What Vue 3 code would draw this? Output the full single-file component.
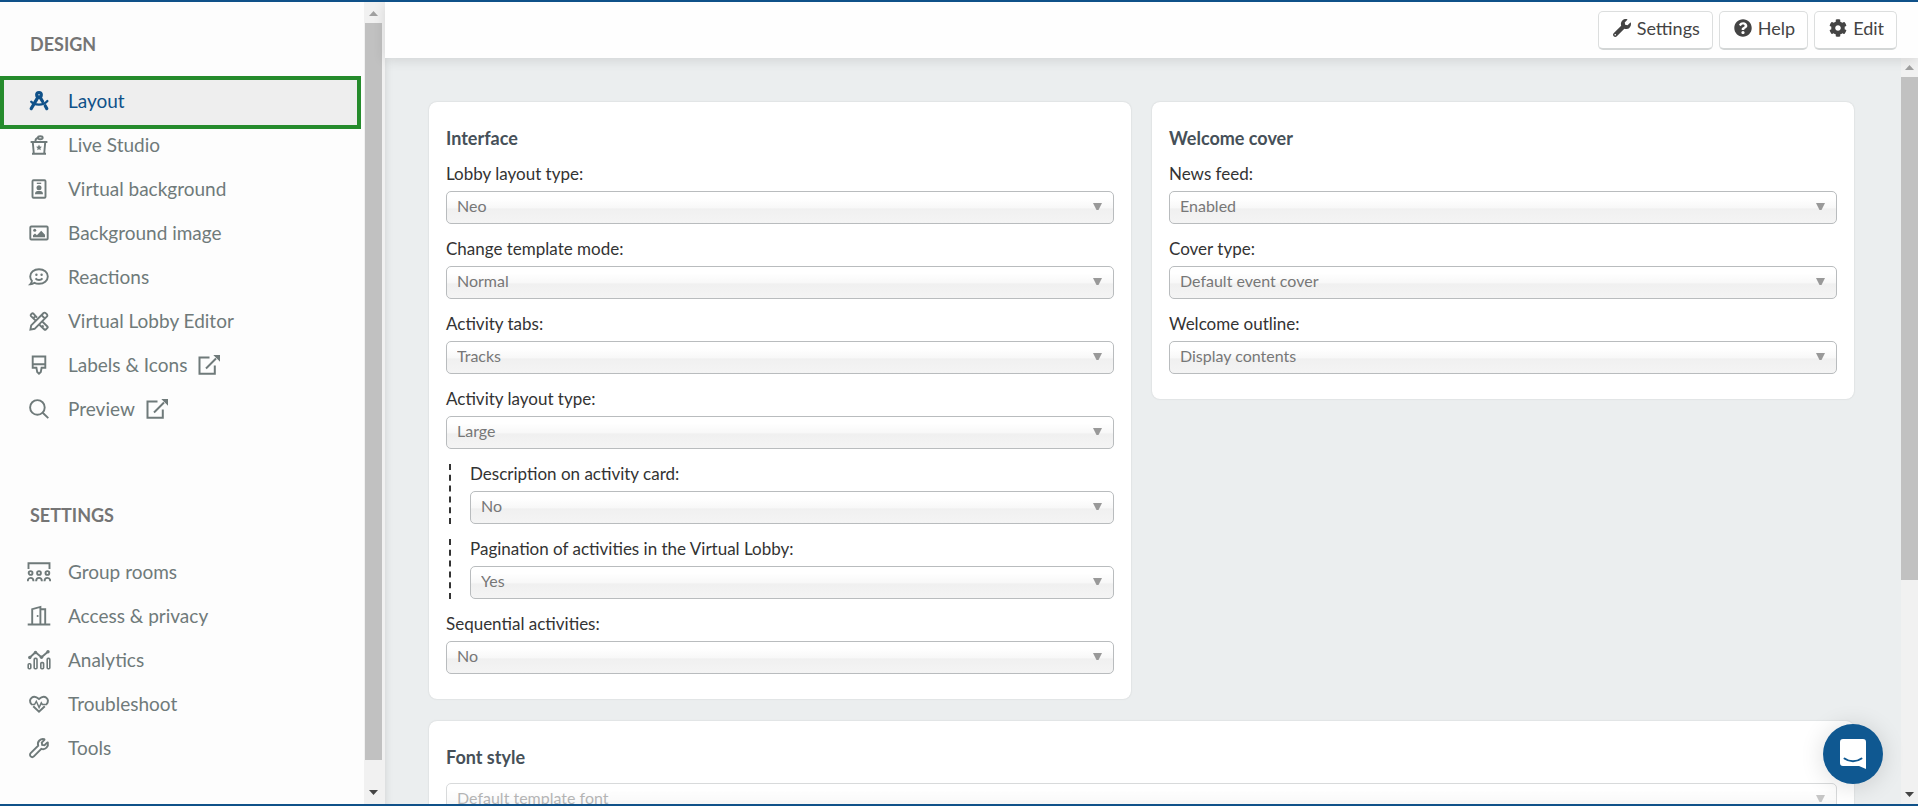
<script setup>
import { ref, reactive } from 'vue'

const wrenchPath = 'M507.73 109.1c-2.24-9.03-13.54-12.09-20.12-5.51l-74.36 74.36-67.88-11.31-11.31-67.88 74.36-74.36c6.62-6.62 3.43-17.9-5.66-20.16-47.38-11.74-99.55.91-136.58 37.93-39.64 39.64-50.55 97.1-34.05 147.2L18.74 402.76c-24.99 24.99-24.99 65.51 0 90.5 24.99 24.99 65.51 24.99 90.5 0l213.21-213.21c50.12 16.71 107.47 5.68 147.37-34.22 37.07-37.07 49.7-89.32 37.91-136.73z'

// Stroked 24x24 line icons; "f" marks solid shapes.
const icons = {
  layout: '<g stroke-width="3.200" stroke-linecap="round"><circle cx="12" cy="5.800" r="2.300"/><path d="M10.700 8.600 4.200 19.600"/><path d="M13.300 8.600l2.300 3.900M18.200 16.800l1.600 2.800"/><path d="M4.200 12.800c3.600 3.800 11.800 4.200 16.200-.8" stroke-width="2.300"/></g>',
  studio: '<path d="M3.600 9h16.800M5.800 9.300l1 11.200M18.200 9.300l-1 11.200M5 20.800h14M8.500 8.700c-.3-2.200 1-3.700 3.500-4.200"/><ellipse cx="13.300" cy="4.800" rx="2.400" ry="1.500"/><path class="f" d="m12 11.600.9 1.900 2 .3-1.500 1.400.4 2-1.800-1-1.800 1 .4-2-1.500-1.400 2-.3z"/>',
  badge: '<rect x="5.500" y="3.200" width="13" height="17.600" rx="1"/><path d="M9.800 6.300h4.400" stroke-width="1.300"/><circle class="f" cx="12" cy="10.800" r="2.500"/><path class="f" d="M8 17.200c0-2.200 1.200-3.200 2.700-3.200h2.600c1.500 0 2.700 1 2.700 3.200z"/>',
  image: '<rect x="3.300" y="5.500" width="17.400" height="13" rx="1"/><circle class="f" cx="7.700" cy="9.300" r="1.500"/><path class="f" d="M6 16.300v-2l2-1.800 1.900 1.700 4.300-4.500 3.800 4v2.600z"/>',
  reaction: '<path d="M12 4.200c5 0 8.800 3.200 8.800 7.300s-3.800 7.300-8.800 7.300c-1.700 0-3.200-.3-4.500-1-1.300 1-2.800 1.500-4.300 1.500 1-1 1.600-2.300 1.700-3.500-1-1.200-1.700-2.700-1.700-4.300 0-4.100 3.800-7.300 8.800-7.300z"/><circle class="f" cx="9.400" cy="9.800" r="1.200"/><circle class="f" cx="14.600" cy="9.800" r="1.200"/><path d="M8.500 13.300c1.800 2.300 5.200 2.300 7 0"/>',
  tools: '<path d="M10 8.600 6.200 4.400c-.8-.8-3.200 1.500-2.400 2.400l4.600 4.600M15.500 12.800l4.900 4.700c.5.500.5.900 0 1.400l-1.600 1.600c-.5.500-.9.500-1.400 0L12.700 16M3.400 20.600l.8-4.200L16.600 4c1.300-1.300 4.700 2 3.400 3.400L7.600 19.800zM14.500 6.200l3.300 3.300M6.300 9.200l1.600-1.500M15 18l1.500-1.500"/>',
  brush: '<path d="M5.700 3.500h12.600v11.300h-3.700l-.8 4.200-1.800 1.700-1.800-1.700-.8-4.200H5.700zM5.700 11.300h12.600"/>',
  search: '<circle cx="10.400" cy="10.400" r="7.300"/><path d="m15.700 15.700 5.600 5.400"/>',
  group: '<path d="M1.500 9V3.300h21V9"/><circle cx="3.600" cy="13" r="1.900"/><circle cx="12" cy="13" r="1.900"/><circle cx="20.400" cy="13" r="1.900"/><path d="M.7 21.200c.2-4.400 5.600-4.400 5.800 0M9.100 21.200c.2-4.400 5.600-4.400 5.800 0M17.500 21.200c.2-4.400 5.600-4.400 5.800 0"/>',
  door: '<path d="M.7 20.500h22.600M5.200 20.500V5.200l8.200-2.300v17.600M13.400 5.200h4.800v15.300"/><circle class="f" cx="10.600" cy="12" r="1"/>',
  chart: '<path d="m2.500 9.800 6-5.500 6 5 6.700-5.800" stroke-width="1.900"/><circle class="f" cx="2.800" cy="9.500" r="1.700"/><circle class="f" cx="8.500" cy="4.500" r="1.700"/><circle class="f" cx="14.500" cy="9.200" r="1.700"/><circle class="f" cx="21" cy="3.700" r="1.700"/><g stroke-width="1.600"><rect x="1.200" y="15.800" width="2.600" height="5" rx="1"/><rect x="7.200" y="10.400" width="2.800" height="10.400" rx="1"/><rect x="13.800" y="14.600" width="2.800" height="6.200" rx="1"/><rect x="20.200" y="10.400" width="2.600" height="10.400" rx="1"/></g>',
  heart: '<path d="M4.400 12.200C.8 7.200 6.200 1.600 12 7c5.800-5.400 11.200.2 7.600 5.200M6.200 14.200l5.800 5.600 5.800-5.600" stroke-width="1.900"/><path d="M4 12.500h3.500l1.800-3.200 2.800 6.200 2.200-4.600 1 1.600H20" stroke-width="1.500"/>',
  wrench: `<path transform="translate(3 3) scale(.0352)" stroke-width="54" d="${wrenchPath}"/>`
}

const groups = [
  { title: 'Design', items: [
    { label: 'Layout', icon: 'layout' },
    { label: 'Live Studio', icon: 'studio' },
    { label: 'Virtual background', icon: 'badge' },
    { label: 'Background image', icon: 'image' },
    { label: 'Reactions', icon: 'reaction' },
    { label: 'Virtual Lobby Editor', icon: 'tools' },
    { label: 'Labels & Icons', icon: 'brush', external: true },
    { label: 'Preview', icon: 'search', external: true }
  ] },
  { title: 'Settings', items: [
    { label: 'Group rooms', icon: 'group' },
    { label: 'Access & privacy', icon: 'door' },
    { label: 'Analytics', icon: 'chart' },
    { label: 'Troubleshoot', icon: 'heart' },
    { label: 'Tools', icon: 'wrench' }
  ] }
]
const active = ref('Layout')

const actions = [
  { label: 'Settings', d: wrenchPath + 'M64 472c-13.25 0-24-10.75-24-24 0-13.26 10.75-24 24-24s24 10.74 24 24c0 13.25-10.750 24-24 24z' },
  { label: 'Help', d: 'M504 256c0 136.997-111.043 248-248 248S8 392.997 8 256C8 119.083 119.043 8 256 8s248 111.083 248 248zM262.655 90c-54.497 0-89.255 22.957-116.549 63.758-3.536 5.286-2.353 12.415 2.715 16.258l34.699 26.310c5.205 3.947 12.621 3.008 16.665-2.122 17.864-22.658 30.113-35.797 57.303-35.797 20.429 0 45.698 13.148 45.698 32.958 0 14.976-12.363 22.667-32.534 33.976C247.128 238.528 216 254.941 216 296v4c0 6.627 5.373 12 12 12h56c6.627 0 12-5.373 12-12v-1.333c0-28.462 83.186-29.647 83.186-106.667 0-58.002-60.165-102-116.531-102zM256 338c-25.365 0-46 20.635-46 46 0 25.364 20.635 46 46 46s46-20.636 46-46c0-25.365-20.635-46-46-46z' },
  { label: 'Edit', d: 'M487.400 315.700l-42.600-24.600c4.300-23.200 4.300-47 0-70.200l42.600-24.600c4.900-2.800 7.100-8.600 5.500-14-11.100-35.600-30-67.800-54.700-94.600-3.800-4.100-10-5.100-14.800-2.300L380.800 110c-17.900-15.400-38.500-27.300-60.800-35.100V25.800c0-5.600-3.900-10.500-9.400-11.700-36.700-8.200-74.300-7.800-109.200 0-5.500 1.200-9.400 6.100-9.400 11.700V75c-22.200 7.900-42.800 19.800-60.800 35.100L88.700 85.500c-4.900-2.800-11-1.900-14.800 2.300-24.700 26.700-43.600 58.900-54.700 94.600-1.700 5.400.6 11.200 5.500 14L67.300 221c-4.300 23.200-4.300 47 0 70.200l-42.600 24.600c-4.900 2.800-7.100 8.600-5.500 14 11.100 35.600 30 67.800 54.700 94.600 3.800 4.100 10 5.100 14.800 2.300l42.600-24.600c17.900 15.400 38.500 27.300 60.800 35.100v49.200c0 5.600 3.900 10.500 9.400 11.700 36.700 8.200 74.300 7.800 109.200 0 5.500-1.200 9.400-6.100 9.400-11.700v-49.200c22.200-7.900 42.800-19.800 60.800-35.100l42.600 24.600c4.900 2.800 11 1.900 14.800-2.300 24.700-26.700 43.600-58.900 54.700-94.600 1.500-5.500-.7-11.300-5.600-14.100zM256 336c-44.100 0-80-35.900-80-80s35.900-80 80-80 80 35.900 80 80-35.900 80-80 80z' }
]

const cards = reactive([
  { title: 'Interface', fields: [
    { id: 'lobby', label: 'Lobby layout type:', value: 'Neo' },
    { id: 'mode', label: 'Change template mode:', value: 'Normal' },
    { id: 'tabs', label: 'Activity tabs:', value: 'Tracks' },
    { id: 'activity', label: 'Activity layout type:', value: 'Large' },
    { id: 'description', label: 'Description on activity card:', value: 'No', options: ['No', 'Yes'], nested: true },
    { id: 'pagination', label: 'Pagination of activities in the Virtual Lobby:', value: 'Yes', options: ['No', 'Yes'], nested: true },
    { id: 'sequential', label: 'Sequential activities:', value: 'No', options: ['No', 'Yes'] }
  ] },
  { title: 'Welcome cover', fields: [
    { id: 'news', label: 'News feed:', value: 'Enabled' },
    { id: 'cover', label: 'Cover type:', value: 'Default event cover' },
    { id: 'outline', label: 'Welcome outline:', value: 'Display contents' }
  ] },
  { title: 'Font style', wide: true, fields: [
    { id: 'font', value: 'Default template font', disabled: true }
  ] }
])
</script>

<template>
  <div class="page">
    <aside class="sidebar">
      <nav class="nav">
        <section v-for="g in groups" :key="g.title" class="group">
          <h2 class="group-title">{{ g.title }}</h2>
          <ul class="list">
            <li v-for="item in g.items" :key="item.label">
              <a href="#" class="item" :class="{ active: item.label === active }" @click.prevent="active = item.label">
                <svg class="icon" viewBox="0 0 24 24" aria-hidden="true" v-html="icons[item.icon]"></svg>
                <span>{{ item.label }}</span>
                <svg v-if="item.external" class="external" viewBox="0 0 24 24" aria-hidden="true">
                  <path d="M12.500 4.500H2.500v16.300h15.300V12.500M9 15.500 19 5.500" />
                  <path class="solid" d="M16.300 2H23v6.700l-2.200-2.200-2.300-2.300z" />
                </svg>
              </a>
            </li>
          </ul>
        </section>
      </nav>
      <div class="scroll" aria-hidden="true">
        <svg class="arrow dim" viewBox="0 0 9 5"><path d="M0 5 4.500 0 9 5z" /></svg>
        <div class="track"><div class="thumb tall"></div></div>
        <svg class="arrow" viewBox="0 0 9 5"><path d="M0 0h9L4.500 5z" /></svg>
      </div>
    </aside>

    <div class="body">
      <header class="header">
        <button v-for="a in actions" :key="a.label" type="button" class="action">
          <svg viewBox="0 0 512 512" aria-hidden="true"><path :d="a.d" /></svg>{{ a.label }}
        </button>
      </header>
      <div class="lower">
        <main class="content">
          <section v-for="c in cards" :key="c.title" class="card" :class="{ wide: c.wide }">
            <h3 :id="c.fields[0].id + '-title'" class="card-title">{{ c.title }}</h3>
            <div v-for="f in c.fields" :key="f.id" class="field" :class="{ nested: f.nested }">
              <label v-if="f.label" :for="f.id">{{ f.label }}</label>
              <div class="control" :class="{ disabled: f.disabled }">
                <select :id="f.id" v-model="f.value" :disabled="f.disabled" :aria-labelledby="f.label ? undefined : f.id + '-title'">
                  <option v-for="o in f.options || [f.value]" :key="o">{{ o }}</option>
                </select>
                <svg class="caret" viewBox="0 0 9 7" aria-hidden="true"><path d="M0 0h9L5.500 7h-2z" /></svg>
              </div>
            </div>
          </section>
        </main>
        <div class="scroll" aria-hidden="true">
          <svg class="arrow dim" viewBox="0 0 9 5"><path d="M0 5 4.500 0 9 5z" /></svg>
          <div class="track"><div class="thumb short"></div></div>
          <svg class="arrow" viewBox="0 0 9 5"><path d="M0 0h9L4.500 5z" /></svg>
        </div>
      </div>
    </div>

    <button type="button" class="chat" aria-label="Open chat">
      <svg viewBox="0 0 28 32" aria-hidden="true">
        <path class="bubble" d="M4 1h20a3 3 0 0 1 3 3v27l-7-3H4a3 3 0 0 1-3-3V4a3 3 0 0 1 3-3z" />
        <path class="smile" d="M5.500 20.500c5 3.600 12 3.600 17 0" />
      </svg>
    </button>
  </div>
</template>

<style>
body {
  margin: 0;
}
</style>

<style scoped>
.page {
  box-sizing: border-box;
  display: flex;
  height: 100vh;
  overflow: hidden;
  border-top: 2px solid #0f5189;
  border-bottom: 2px solid #0f5189;
  background: #ebeeef;
  color: #333;
  font-family: Lato, "Liberation Sans", sans-serif;
  font-size: 18px;
  line-height: 22px;
}
.sidebar {
  display: flex;
  flex: none;
  width: 385px;
  background: #fdfdfd;
}
.nav {
  flex: 1;
}
.group {
  margin-bottom: 42px;
}
.group-title {
  margin: 0;
  padding: 31px 30px 24px;
  color: #757575;
  font-size: 18px;
  font-weight: 700;
  text-transform: uppercase;
}
.list {
  margin: 0;
  padding: 0;
  list-style: none;
}
.item {
  position: relative;
  isolation: isolate;
  display: flex;
  align-items: center;
  height: 44px;
  padding-left: 27px;
  color: #6f7a7a;
  font-size: 19px;
  text-decoration: none;
}
.item.active {
  color: #0f5189;
}
.item.active::after {
  content: "";
  position: absolute;
  z-index: -1;
  inset: -3px 3px -6px 0;
  border: 4px solid #258b2c;
  background: #eee;
}
.icon {
  width: 24px;
  height: 24px;
  margin-right: 17px;
  fill: none;
  stroke: currentColor;
  stroke-width: 1.9;
}
.icon :deep(.f) {
  fill: currentColor;
  stroke: none;
}
.external {
  width: 24px;
  height: 24px;
  margin-left: 10px;
  fill: none;
  stroke: currentColor;
  stroke-width: 2;
}
.external .solid {
  fill: currentColor;
  stroke: none;
}
.scroll {
  display: flex;
  flex: none;
  flex-direction: column;
  align-items: center;
  width: 17px;
  background: #f1f1f1;
}
.sidebar .scroll {
  padding: 2px 3px 2px 1px;
}
.arrow {
  flex: none;
  width: 9px;
  height: 5px;
  padding: 7px 4px;
  fill: #444;
}
.arrow.dim {
  fill: #a0a0a0;
}
.track {
  flex: 1;
  width: 100%;
}
.thumb {
  background: #c1c1c1;
}
.thumb.tall {
  height: 97%;
}
.thumb.short {
  height: 71%;
}
.body {
  display: flex;
  flex: 1;
  flex-direction: column;
  min-width: 0;
}
.header {
  position: relative;
  display: flex;
  flex: none;
  justify-content: flex-end;
  gap: 6px;
  padding: 9px 21px 8px;
  background: #fefefe;
  box-shadow: 0 2px 12px rgba(0, 0, 0, 0.12);
}
.action {
  display: flex;
  align-items: center;
  gap: 6px;
  height: 39px;
  padding: 0 12px 4px 14px;
  border: 1px solid #dcdede;
  border-bottom: 2px solid #d3d6d6;
  border-radius: 5px;
  background: #fff;
  color: #444;
  font-family: inherit;
  font-size: 18px;
}
.action svg {
  width: 18px;
  height: 18px;
  fill: currentColor;
}
.lower {
  display: flex;
  flex: 1;
  min-height: 0;
}
.content {
  display: grid;
  flex: 1;
  grid-template-columns: 1fr 1fr;
  gap: 22px 21px;
  align-content: start;
  align-items: start;
  min-width: 0;
  padding: 44px 47px 44px 44px;
  overflow: hidden;
  box-shadow: inset 8px 0 8px -8px rgba(0, 0, 0, 0.12);
}
.card {
  padding: 25px 17px;
  border-radius: 8px;
  background: #fff;
  box-shadow: 0 0 2px rgba(0, 0, 0, 0.14);
}
.card.wide {
  grid-column: 1 / -1;
}
.card-title {
  margin: 0 0 15px;
  color: #465058;
  font-size: 18px;
  font-weight: 700;
}
.field + .field {
  margin-top: 15px;
}
.field label {
  display: block;
  margin-bottom: 7px;
  font-size: 17px;
  line-height: 20px;
}
.field.nested {
  margin-left: 3px;
  padding-left: 19px;
  border-left: 2px dashed #333;
}
.control {
  display: grid;
  align-items: center;
}
.control.disabled {
  opacity: 0.55;
}
.control select {
  grid-area: 1 / 1;
  width: 100%;
  height: 33px;
  padding: 0 30px 4px 10px;
  border: 1px solid #b9bcbe;
  border-radius: 5px;
  appearance: none;
  background: linear-gradient(#fff 20%, #f8f8f8 50%, #f0f0f0 55%, #f4f4f4 100%);
  color: #777;
  font-family: inherit;
  font-size: 16px;
  opacity: 1;
}
.caret {
  grid-area: 1 / 1;
  justify-self: end;
  width: 9px;
  height: 7px;
  margin: 0 12px 2px 0;
  fill: #999;
  pointer-events: none;
}
.chat {
  position: fixed;
  right: 35px;
  bottom: 22px;
  display: grid;
  place-items: center;
  width: 60px;
  height: 60px;
  padding: 0;
  border: 0;
  border-radius: 50%;
  background: #0f5891;
  box-shadow: 0 2px 24px rgba(0, 0, 0, 0.14);
}
.chat svg {
  width: 28px;
  height: 32px;
}
.bubble {
  fill: #fff;
}
.smile {
  fill: none;
  stroke: #0f5891;
  stroke-width: 2;
  stroke-linecap: round;
}
</style>
